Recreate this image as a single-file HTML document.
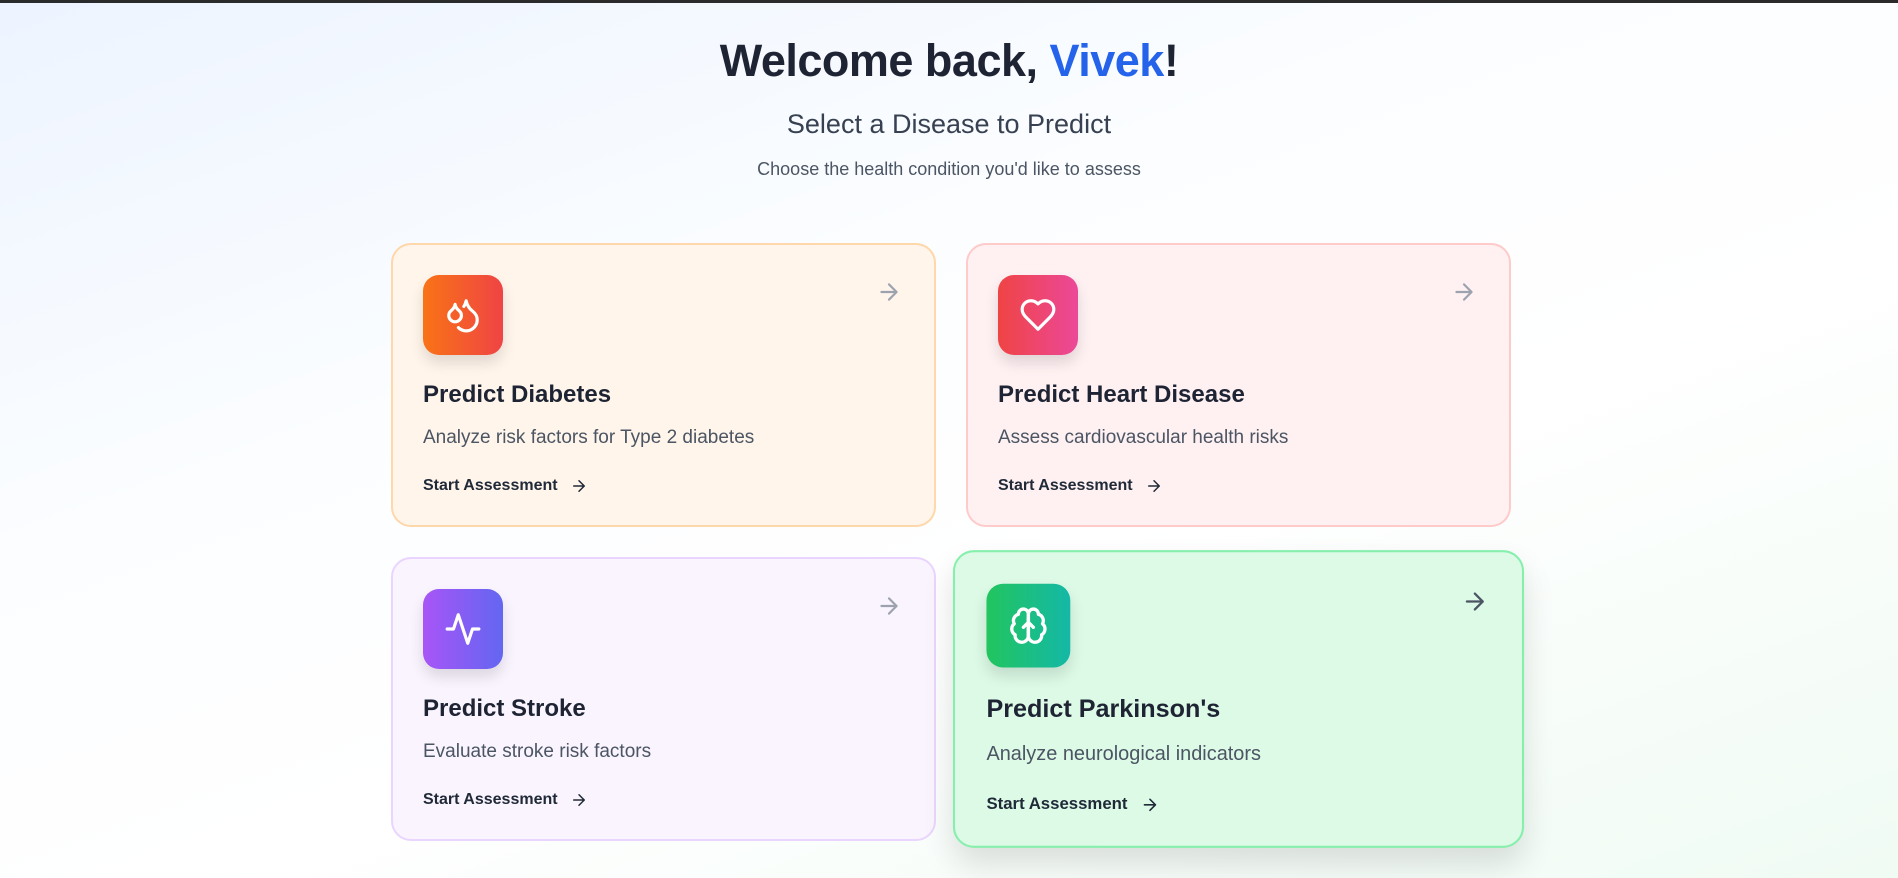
<!DOCTYPE html>
<html><head><meta charset="utf-8"><style>
*{box-sizing:border-box;margin:0;padding:0}
html,body{width:1898px;height:878px;overflow:hidden}
body{font-family:"Liberation Sans",sans-serif;background:linear-gradient(160deg,#edf4ff 0%,#fbfdff 35%,#ffffff 60%,#f0fbf4 100%);position:relative;color:#1f2937}
.topbar{position:absolute;left:0;top:0;width:100%;height:3px;background:#2b2b2b}
h1{position:absolute;top:35px;width:100%;text-align:center;font-size:45px;font-weight:700;color:#1e2433;letter-spacing:-0.5px}
h1 span{color:#2563eb}
h2{position:absolute;top:109px;width:100%;text-align:center;font-size:27px;font-weight:400;color:#374151}
.sub{position:absolute;top:159px;width:100%;text-align:center;font-size:18px;color:#4b5563}
.card{position:absolute;width:545px;height:284px;border-radius:20px;border:2px solid;padding:30px 30px}
.icon{width:80px;height:80px;border-radius:16px;display:flex;align-items:center;justify-content:center;box-shadow:0 8px 14px rgba(0,0,0,.12)}
.icon svg{width:38px;height:38px}
.title{margin-top:26px;font-size:24px;font-weight:700;color:#1e2433}
.desc{margin-top:18px;font-size:19px;color:#4b5563}
.start{margin-top:28px;font-size:16px;font-weight:700;color:#1f2937;display:flex;align-items:center;gap:12px}
.start svg{width:18px;height:18px}
.tr{position:absolute;right:32px;top:34px;width:26px;height:26px}
</style></head><body>
<div class="topbar"></div>
<h1>Welcome back, <span>Vivek</span>!</h1>
<h2>Select a Disease to Predict</h2>
<div class="sub">Choose the health condition you'd like to assess</div>

<div class="card" style="left:391px;top:243px;background:#fff5eb;border-color:#fed7aa">
<svg class="tr" viewBox="0 0 24 24" fill="none" stroke="#9ca3af" stroke-width="2" stroke-linecap="round" stroke-linejoin="round"><path d="M5 12h14M12 5l7 7-7 7"/></svg>
<div class="icon" style="background:linear-gradient(90deg,#f97316,#ef4444)"><svg viewBox="0 0 24 24" fill="none" stroke="#fff" stroke-width="2" stroke-linecap="round" stroke-linejoin="round"><path d="M7 16.3c2.2 0 4-1.83 4-4.05 0-1.16-.57-2.26-1.71-3.19S7.29 6.75 7 5.3c-.29 1.45-1.14 2.84-2.29 3.76S3 11.1 3 12.25c0 2.22 1.8 4.05 4 4.05z"/><path d="M12.56 6.6A10.97 10.97 0 0 0 14 3.02c.5 2.5 2 4.9 4 6.5s3 3.5 3 5.5a6.98 6.98 0 0 1-11.91 4.97"/></svg></div>
<div class="title">Predict Diabetes</div>
<div class="desc">Analyze risk factors for Type 2 diabetes</div>
<div class="start">Start Assessment <svg viewBox="0 0 24 24" fill="none" stroke="#1f2937" stroke-width="2" stroke-linecap="round" stroke-linejoin="round"><path d="M5 12h14M12 5l7 7-7 7"/></svg></div>
</div>

<div class="card" style="left:966px;top:243px;background:#fff1f2;border-color:#fecaca">
<svg class="tr" viewBox="0 0 24 24" fill="none" stroke="#9ca3af" stroke-width="2" stroke-linecap="round" stroke-linejoin="round"><path d="M5 12h14M12 5l7 7-7 7"/></svg>
<div class="icon" style="background:linear-gradient(90deg,#ef4444,#ec4899)"><svg viewBox="0 0 24 24" fill="none" stroke="#fff" stroke-width="2" stroke-linecap="round" stroke-linejoin="round"><path d="M19 14c1.49-1.46 3-3.21 3-5.5A5.5 5.5 0 0 0 16.5 3c-1.76 0-3 .5-4.5 2-1.5-1.5-2.740-2-4.5-2A5.5 5.5 0 0 0 2 8.5c0 2.3 1.5 4.050 3 5.5l7 7Z"/></svg></div>
<div class="title">Predict Heart Disease</div>
<div class="desc">Assess cardiovascular health risks</div>
<div class="start">Start Assessment <svg viewBox="0 0 24 24" fill="none" stroke="#1f2937" stroke-width="2" stroke-linecap="round" stroke-linejoin="round"><path d="M5 12h14M12 5l7 7-7 7"/></svg></div>
</div>

<div class="card" style="left:391px;top:557px;background:#faf4fe;border-color:#e9d5ff">
<svg class="tr" viewBox="0 0 24 24" fill="none" stroke="#9ca3af" stroke-width="2" stroke-linecap="round" stroke-linejoin="round"><path d="M5 12h14M12 5l7 7-7 7"/></svg>
<div class="icon" style="background:linear-gradient(90deg,#a855f7,#6366f1)"><svg viewBox="0 0 24 24" fill="none" stroke="#fff" stroke-width="2" stroke-linecap="round" stroke-linejoin="round"><path d="M22 12h-4l-3 9L9 3l-3 9H2"/></svg></div>
<div class="title">Predict Stroke</div>
<div class="desc">Evaluate stroke risk factors</div>
<div class="start">Start Assessment <svg viewBox="0 0 24 24" fill="none" stroke="#1f2937" stroke-width="2" stroke-linecap="round" stroke-linejoin="round"><path d="M5 12h14M12 5l7 7-7 7"/></svg></div>
</div>

<div class="card" style="left:966px;top:557px;background:#dcfae6;border-color:#86efac;transform:scale(1.048);box-shadow:0 16px 30px rgba(0,0,0,.12)">
<svg class="tr" viewBox="0 0 24 24" fill="none" stroke="#4b5563" stroke-width="2" stroke-linecap="round" stroke-linejoin="round"><path d="M5 12h14M12 5l7 7-7 7"/></svg>
<div class="icon" style="background:linear-gradient(90deg,#22c55e,#14b8a6)"><svg viewBox="0 0 24 24" fill="none" stroke="#fff" stroke-width="2" stroke-linecap="round" stroke-linejoin="round"><path d="M12 5a3 3 0 1 0-5.997.125 4 4 0 0 0-2.526 5.77 4 4 0 0 0 .556 6.588A4 4 0 1 0 12 18Z"/><path d="M12 5a3 3 0 1 1 5.997.125 4 4 0 0 1 2.526 5.77 4 4 0 0 1-.556 6.588A4 4 0 1 1 12 18Z"/><path d="M12 8v10M9 13l3-3 3 3"/></svg></div>
<div class="title">Predict Parkinson's</div>
<div class="desc">Analyze neurological indicators</div>
<div class="start">Start Assessment <svg viewBox="0 0 24 24" fill="none" stroke="#1f2937" stroke-width="2" stroke-linecap="round" stroke-linejoin="round"><path d="M5 12h14M12 5l7 7-7 7"/></svg></div>
</div>
</body></html>
